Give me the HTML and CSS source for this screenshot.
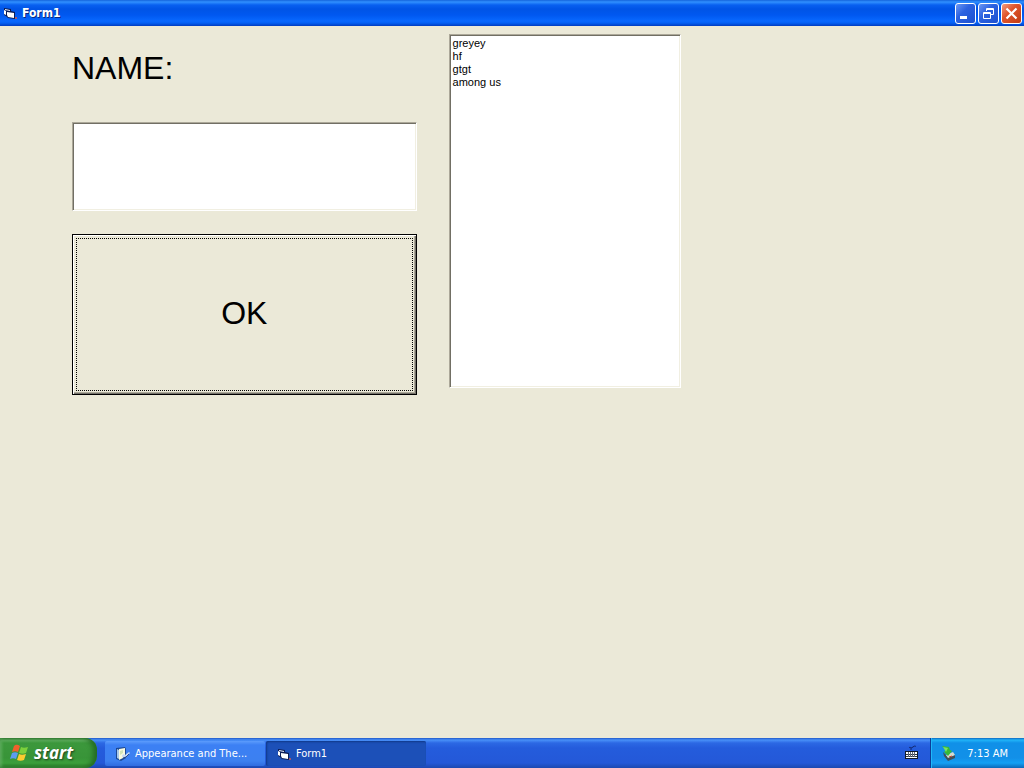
FILE: index.html
```html
<!DOCTYPE html>
<html lang="en">
<head>
<meta charset="utf-8">
<meta name="viewport" content="width=device-width, initial-scale=1">
<title>Form1</title>
<link rel="stylesheet" href="styles.css">
</head>
<body>
<svg class="defs" aria-hidden="true">
  <symbol id="form-icon" viewBox="0 0 16 16">
    <path d="M2 3l7 1v2l4 1v7l-7-1-2-2-2-1z" fill="#0c1c54"/>
    <path d="M2 5l2 1v4l-2-1z" fill="#fff"/>
    <path d="M3 4l5 1v1L3 5z" fill="#e8f0ff"/>
    <path d="M5 7l7 1v5l-6-1-1-2z" fill="#fff"/>
    <path d="M13 12h2v2h-2z" fill="#a05870"/>
  </symbol>
</svg>
<header class="titlebar">
  <svg class="icon"><use href="#form-icon"/></svg>
  <h1 class="title">Form1</h1>
  <div class="window-buttons">
    <button class="window-button" type="button" aria-label="Minimize">
      <svg viewBox="0 0 19 19"><path d="M4 12h7v3H4z" fill="#fff"/></svg>
    </button>
    <button class="window-button" type="button" aria-label="Restore">
      <svg viewBox="0 0 19 19" fill="none" stroke="#fff"><path d="M7.500 7V4.500h7v6H12M7 5.500h8M4.500 8.500h7v6h-7zM4 9.500h8"/></svg>
    </button>
    <button class="window-button close" type="button" aria-label="Close">
      <svg viewBox="0 0 19 19"><path d="M4.500 4.500l10 10M14.500 4.500l-10 10" stroke="#fff" stroke-width="2.200"/></svg>
    </button>
  </div>
</header>
<main class="form">
  <div class="entry">
    <label class="name-label" for="name">NAME:</label>
    <input class="name-input" id="name" type="text">
    <button class="ok" type="button"><span class="focus">OK</span></button>
  </div>
  <select class="list" size="20" aria-label="Names">
    <option>greyey</option>
    <option>hf</option>
    <option>gtgt</option>
    <option>among us</option>
  </select>
</main>
<footer class="taskbar">
  <button class="start" type="button">
    <svg class="flag" viewBox="0 0 20 20">
      <path d="M4 3c2-2 4-1 6 0L8 9C6 8 4 8 2 9z" fill="#f0602c"/>
      <path d="M11 4c2 1 4 1 7 0l-2 6c-2 1-5 1-7 0z" fill="#7cd03c"/>
      <path d="M2 10c2-1 4-1 6 0l-2 6c-2-1-4-1-6 0z" fill="#5c9cf0"/>
      <path d="M9 11c2 1 4 1 7 0l-2 6c-2 1-5 1-7 0z" fill="#fccc30"/>
    </svg>
    <span>start</span>
  </button>
  <nav class="tasks" aria-label="Open windows">
    <button class="task" type="button">
      <svg class="icon" viewBox="0 0 16 16">
        <path d="M1 2l9-1 1 2v9l-5 3-5-2z" fill="#1c4894"/>
        <path d="M2 3l2 1v9l-2-1z" fill="#a8c8e8"/>
        <path d="M4 3l6-1v9l-6 3z" fill="#f8fae0"/>
        <path d="M5 5l3-1v3l-3 2z" fill="#d0e4b8"/>
        <path d="M8 8l2 1 4-3 1 1-4 4-3 1-1-2z" fill="#c4d8f4"/>
        <path d="M8 12l3-1 3-3" stroke="#2c4c8c" fill="none"/>
      </svg>
      <span class="task-text">Appearance and The...</span>
    </button>
    <button class="task active" type="button">
      <svg class="icon"><use href="#form-icon"/></svg>
      <span class="task-text">Form1</span>
    </button>
  </nav>
  <button class="keyboard" type="button" aria-label="Keyboard">
    <svg class="icon" viewBox="0 0 16 16">
      <path d="M5 3c1-2 2 1 4-1s2 0 3-1M7 5V3" stroke="#102870" fill="none"/>
      <path d="M1 6h13v8H1z" fill="#101828"/>
      <path d="M2 7h11v6H2z" fill="#fff"/>
      <path d="M2 9.500h11M2 11.500h11" stroke="#303840"/>
      <path d="M4.500 7v5M6.500 7v5M8.500 7v5M10.500 7v5" stroke="#606878"/>
    </svg>
  </button>
  <div class="tray">
    <svg class="icon" viewBox="0 0 16 16">
      <path d="M2 7l5 5 7-2v3l-7 3-4-5z" fill="#405058"/>
      <path d="M5 10l7-3 2 3-7 3z" fill="#d4dcd0"/>
      <path d="M1 1l7 1 1 3 2 1-4 5-4-4 2-2z" fill="#38b838"/>
      <path d="M2 2l5 1-2 4z" fill="#78e060"/>
      <path d="M8 12l3-1" stroke="#d04030"/>
    </svg>
    <time class="clock" datetime="07:13">7:13 AM</time>
  </div>
</footer>
</body>
</html>
```
FILE: styles.css
```css
* {
  box-sizing: border-box;
}

body {
  display: flex;
  flex-direction: column;
  min-height: 100vh;
  margin: 0;
  background: #ebe9d8;
  font-family: "DejaVu Sans Condensed", "DejaVu Sans", sans-serif;
  font-size: 11px;
}

button {
  padding: 0;
  border: 0;
  color: inherit;
  font: inherit;
}

.defs {
  position: absolute;
  width: 0;
  height: 0;
}

.icon {
  flex: none;
  width: 16px;
  height: 16px;
}

.titlebar {
  display: flex;
  align-items: center;
  height: 26px;
  padding: 0 2px;
  background: linear-gradient(#1464dc 0, #3090ff 2px, #0860f0 5px, #0054e6 9px, #0058f0 15px, #0868ff 21px, #0460f4 23px, #003cc0 26px);
  color: #fff;
}

.title {
  flex: 1;
  margin: 0 0 0 4px;
  font: bold 12px/16px "DejaVu Sans Condensed", sans-serif;
  text-shadow: 1px 1px #0a2a80;
}

.window-buttons {
  display: flex;
  gap: 2px;
}

.window-button {
  width: 21px;
  height: 21px;
  border: 1px solid #fff;
  border-radius: 3px;
  background: linear-gradient(135deg, #6c98f4, #2c62e0 40%, #1c50d0);
}

.window-button svg {
  display: block;
  width: 19px;
  height: 19px;
}

.close {
  background: linear-gradient(135deg, #f09c80, #e0552c 40%, #c03c14);
}

.form {
  flex: 1;
  display: grid;
  grid-template-columns: 344fr 232fr;
  align-items: start;
  gap: 32px;
  padding: 8px 343px 24px 72px;
}

.entry {
  display: flex;
  flex-direction: column;
  padding-top: 16px;
  font: 32px/36px "Liberation Sans", Arial, sans-serif;
  color: #000;
}

.name-label {
  margin-bottom: 36px;
}

.name-input,
.list {
  width: 100%;
  border: 1px solid;
  border-color: #aca899 #fff #fff #aca899;
  border-radius: 0;
  background: #fff;
  box-shadow: inset 1px 1px #716f64, inset -1px -1px #f1efe2;
  color: #000;
  outline: 0;
}

.name-input {
  height: 89px;
  margin-bottom: 23px;
  padding: 0 4px;
  font: inherit;
}

.ok {
  display: flex;
  height: 161px;
  padding: 3px;
  border: 1px solid #000;
  background: #ebe9d8;
  box-shadow: inset 1px 1px #fff, inset -1px -1px #74726a, inset -2px -2px #aca899;
}

.focus {
  flex: 1;
  display: flex;
  align-items: center;
  justify-content: center;
  padding-bottom: 4px;
  border: 1px dotted #000;
}

.list {
  height: 354px;
  padding: 2px;
  font: 11px/13px "Liberation Sans", Arial, sans-serif;
  overflow: auto;
}

.list option {
  min-height: 13px;
  padding: 0 1px;
  line-height: 13px;
}

.taskbar {
  display: flex;
  height: 30px;
  background: linear-gradient(#2058c8 0, #4890f8 2px, #2c68e4 5px, #245cdc 10px, #2458d8 25px, #1c48b0 30px);
  color: #fff;
}

.start {
  display: flex;
  align-items: center;
  gap: 4px;
  width: 97px;
  padding-left: 10px;
  border-radius: 0 12px 12px 0;
  background: linear-gradient(#2c702c 0, #64b464 2px, #3c983c 5px, #389438 20px, #3ca03c 25px, #287828 30px);
  box-shadow: inset -4px 0 5px #246c24, inset 2px 0 3px #5cac5c;
  font: italic bold 17px/24px "Open Sans", sans-serif;
  text-shadow: 1px 1px 2px #1c401c;
}

.flag {
  width: 20px;
  height: 20px;
}

.tasks {
  flex: 1;
  display: flex;
  gap: 1px;
  min-width: 0;
  padding: 3px 8px 2px;
}

.task {
  display: flex;
  align-items: center;
  gap: 4px;
  flex: 0 1 160px;
  min-width: 0;
  padding: 0 10px;
  border-radius: 2px;
  background: linear-gradient(#5c9cfc 0, #3c80f4 4px, #3c80f0 20px, #306ce0 25px);
  text-align: left;
  white-space: nowrap;
}

.task-text {
  overflow: hidden;
}

.active {
  background: #1c50b8;
  box-shadow: inset 1px 1px 2px #103888;
}

.keyboard {
  display: flex;
  align-items: center;
  margin-right: 10px;
  background: none;
}

.tray {
  display: flex;
  align-items: center;
  gap: 10px;
  padding: 0 16px 0 10px;
  border-left: 1px solid #0c3c98;
  background: linear-gradient(#1068c0 0, #20b4f8 2px, #1090e8 5px, #1290e8 20px, #14a0f4 25px, #0c68b8 30px);
  box-shadow: inset 1px 0 #20b8f8;
}

.clock {
  white-space: nowrap;
}
```
